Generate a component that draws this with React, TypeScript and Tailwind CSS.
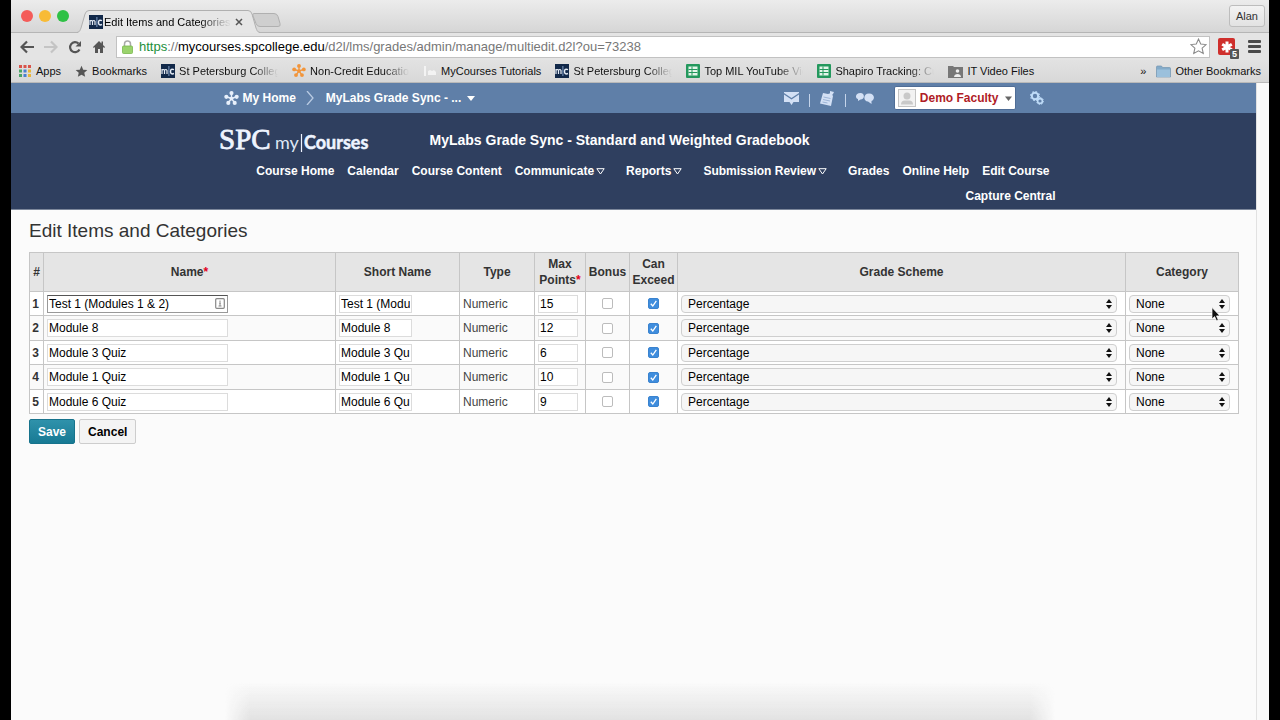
import { Fragment, type ReactNode } from "react";

const fadeMask = "[mask-image:linear-gradient(to_right,#000_75%,transparent)]";

function CampusIcon() {
  return (
    <svg width="14" height="14" viewBox="0 0 14 14" className="shrink-0" aria-hidden="true">
      <rect width="14" height="14" fill="#12294a" />
      <path d="M1 10V5M1 6.500q1.500-2 2.500 0V10M3.500 6.500q1.500-2 2.500 0V10" fill="none" stroke="#e6edf7" strokeWidth="1.200" />
      <path d="M7.900 2v10" stroke="#7f9cc4" strokeWidth="1" />
      <path d="M13 5.600q-3.500-1.500-3.500 1.900t3.500 2" fill="none" stroke="#e6edf7" strokeWidth="1.500" />
    </svg>
  );
}

function HubIcon({ color, size }: { color: string; size: number }) {
  const spokes = [-90, -18, 54, 126, 198];
  return (
    <svg width={size} height={size} viewBox="0 0 16 16" className="shrink-0" aria-hidden="true">
      <g stroke={color} strokeWidth="1.6" fill={color}>
        {spokes.map((deg) => {
          const a = (deg * Math.PI) / 180;
          const x = 8 + 5.8 * Math.cos(a);
          const y = 8 + 5.8 * Math.sin(a);
          return (
            <Fragment key={deg}>
              <path d={`M8 8L${x} ${y}`} />
              <circle cx={x} cy={y} r="2.2" stroke="none" />
            </Fragment>
          );
        })}
        <circle cx="8" cy="8" r="2" stroke="none" />
      </g>
    </svg>
  );
}

function AppsIcon() {
  const colors = ["#d9534a", "#d9534a", "#d9534a", "#4aa564", "#4a7fd0", "#e8b53a", "#4aa564", "#4a7fd0", "#e8b53a"];
  return (
    <svg width="14" height="14" viewBox="0 0 14 14" className="shrink-0" aria-hidden="true">
      {colors.map((c, i) => (
        <rect key={i} x={1 + (i % 3) * 4.5} y={1 + Math.floor(i / 3) * 4.5} width="3" height="3" fill={c} />
      ))}
    </svg>
  );
}

function StarIcon({ filled }: { filled?: boolean }) {
  const size = filled ? 13 : 17;
  return (
    <svg width={size} height={size} viewBox="0 0 16 16" className="shrink-0" aria-hidden="true">
      <path
        d="M8 1l2.1 4.7 5.1.5-3.8 3.4 1.1 5L8 12l-4.500 2.600 1.100-5L.8 6.200l5.100-.5z"
        fill={filled ? "#555" : "#fff"}
        stroke={filled ? "none" : "#8a8a8a"}
        strokeWidth="1"
      />
    </svg>
  );
}

function SheetIcon() {
  return (
    <svg width="14" height="14" viewBox="0 0 14 14" className="shrink-0" aria-hidden="true">
      <rect width="14" height="14" rx="1" fill="#23985d" />
      <rect x="2.500" y="2.500" width="9" height="9" fill="#e4f5ea" />
      <path d="M2.500 5.500h9M2.500 8.500h9M6 2.500v9" stroke="#23985d" strokeWidth="1" />
    </svg>
  );
}

function PageIcon() {
  return (
    <svg width="14" height="14" viewBox="0 0 14 14" className="shrink-0" aria-hidden="true">
      <path d="M1 2h2v10H1zM5 7l2-1 2 1 2-1 2 2v3H5z" fill="#f3f3f3" />
    </svg>
  );
}

function SharedFolderIcon() {
  return (
    <svg width="15" height="13" viewBox="0 0 15 13" className="shrink-0" aria-hidden="true">
      <path d="M0 1h5l1 1h9v11H0z" fill="#777" />
      <circle cx="9.500" cy="6" r="1.800" fill="#eee" />
      <path d="M6 12c0-4 7-4 7 0z" fill="#eee" />
    </svg>
  );
}

function FolderIcon() {
  return (
    <svg width="15" height="13" viewBox="0 0 15 13" className="shrink-0" aria-hidden="true">
      <path d="M.5 2q0-1 1-1h4l1 1.500h7q1 0 1 1V12H.5z" fill="#84abc9" stroke="#7395b1" strokeWidth=".7" />
      <path d="M1 4.500h13V12H1z" fill="#9bc0dc" />
    </svg>
  );
}

type Bookmark = { label: string; icon: ReactNode; cut?: boolean };

const bookmarks: Bookmark[] = [
  { label: "Apps", icon: <AppsIcon /> },
  { label: "Bookmarks", icon: <StarIcon filled /> },
  { label: "St Petersburg Colleg", icon: <CampusIcon />, cut: true },
  { label: "Non-Credit Educatio", icon: <HubIcon color="#f2953a" size={14} />, cut: true },
  { label: "MyCourses Tutorials", icon: <PageIcon /> },
  { label: "St Petersburg Colleg", icon: <CampusIcon />, cut: true },
  { label: "Top MIL YouTube Vie", icon: <SheetIcon />, cut: true },
  { label: "Shapiro Tracking: Cu", icon: <SheetIcon />, cut: true },
  { label: "IT Video Files", icon: <SharedFolderIcon /> },
];

function TabStrip() {
  return (
    <div className="flex h-[33px] items-end border-b border-[#b5b5b5] bg-linear-to-b from-[#ececec] to-[#d6d6d6] pl-[10px]">
      <div className="flex gap-[6px] self-center pb-px">
        <button aria-label="Close window" className="size-3 rounded-full bg-[#f45c59]" />
        <button aria-label="Minimize window" className="size-3 rounded-full bg-[#f8bb36]" />
        <button aria-label="Zoom window" className="size-3 rounded-full bg-[#2fc146]" />
      </div>
      <div className="-mb-px ml-2 flex h-[23px]">
        <svg width="12" height="23" viewBox="0 0 12 23" aria-hidden="true">
          <path d="M0 23C3 22 3 20 4 18L8 4Q9 .5 12 .5V23z" fill="#e6e6e6" />
          <path d="M0 22.500C3 22 3 20 4 18L8 4Q9 .5 12 .5" fill="none" stroke="#b0b0b0" />
        </svg>
        <div className="flex w-[159px] items-center border-t border-[#b0b0b0] bg-[#e6e6e6]">
          <CampusIcon />
          <span className="ml-px w-[127px] text-[11px] whitespace-nowrap text-black [mask-image:linear-gradient(to_right,#000_75%,transparent)]">
            Edit Items and Categories
          </span>
          <button aria-label="Close tab" className="ml-1">
            <svg width="8" height="8" viewBox="0 0 8 8">
              <path d="M1 1l6 6M7 1L1 7" stroke="#555" strokeWidth="1.500" />
            </svg>
          </button>
        </div>
        <svg width="12" height="23" viewBox="0 0 12 23" aria-hidden="true">
          <path d="M12 23C9 22 9 20 8 18L4 4Q3 .5 0 .5V23z" fill="#e6e6e6" />
          <path d="M12 22.500C9 22 9 20 8 18L4 4Q3 .5 0 .5" fill="none" stroke="#b0b0b0" />
        </svg>
      </div>
      <button aria-label="New tab" className="-ml-2 mb-[5px]">
        <svg width="29" height="14" viewBox="0 0 29 14">
          <path d="M2 .5h20q3 0 4 3l2 7q1 3-2 3H8q-3 0-4-3L1 3Q0 .5 2 .5z" fill="#cfcfcf" stroke="#b0b0b0" />
        </svg>
      </button>
      <button className="mr-1 mb-[5px] ml-auto h-[22px] rounded-[3px] border border-[#bdbdbd] bg-linear-to-b from-[#f3f3f3] to-[#e2e2e2] px-[6px] text-[11px] text-[#333]">
        Alan
      </button>
    </div>
  );
}

function Toolbar() {
  return (
    <div className="flex h-[27px] items-center bg-[#e4e4e4] pr-2 pl-2">
      <div className="flex w-[97px] items-center gap-[10px] pl-px">
        <button aria-label="Back">
          <svg width="14" height="14" viewBox="0 0 14 14" fill="none" stroke="#555" strokeWidth="2.200">
            <path d="M14 7H2M7 1.500L1.500 7 7 12.500" />
          </svg>
        </button>
        <button aria-label="Forward">
          <svg width="14" height="14" viewBox="0 0 14 14" fill="none" stroke="#c4c4c4" strokeWidth="2.200">
            <path d="M0 7h12M7 1.500L12.500 7 7 12.500" />
          </svg>
        </button>
        <button aria-label="Reload">
          <svg width="14" height="14" viewBox="0 0 14 14">
            <path d="M11.500 9.500A5 5 0 1 1 10.500 3.500" fill="none" stroke="#555" strokeWidth="2.200" />
            <path d="M13 1v5.500H7.500z" fill="#555" />
          </svg>
        </button>
        <button aria-label="Home">
          <svg width="14" height="14" viewBox="0 0 14 14" fill="#555">
            <path d="M7 1L1 7l.8 1L3 7v6h3V9h2v4h3V7l1.200 1 .8-1-2-2V1.500H9.500V3.500z" />
          </svg>
        </button>
      </div>
      <div className="flex h-[22px] flex-1 items-center gap-[6px] border border-[#c2c2c2] bg-white pr-[2px] pl-[5px]">
        <svg width="11" height="14" viewBox="0 0 11 14" className="shrink-0" aria-hidden="true">
          <path d="M2.500 7V4a3 3 0 0 1 6 0v3" fill="none" stroke="#aaa" strokeWidth="1.500" />
          <rect x=".5" y="6" width="10" height="7.500" rx="1" fill="#9ad36c" stroke="#78b84c" strokeWidth=".8" />
        </svg>
        <span className="flex-1 text-[13px] leading-5 whitespace-nowrap text-[#777]">
          <span className="text-[#1b8f3a]">https</span>://<span className="text-black">mycourses.spcollege.edu</span>/d2l/lms/grades/admin/manage/multiedit.d2l?ou=73238
        </span>
        <button aria-label="Bookmark this page">
          <StarIcon />
        </button>
      </div>
      <button aria-label="Password manager, 5 entries" className="relative ml-2 flex size-[17px] items-center justify-center rounded-[2px] bg-[#cf2f2c]">
        <svg width="12" height="12" viewBox="0 0 12 12" stroke="#fff" strokeWidth="3" aria-hidden="true">
          <path d="M6 .5v11M1.200 3.200l9.600 5.600M1.200 8.800l9.600-5.600" />
        </svg>
        <span className="absolute -right-1 -bottom-1 flex h-[10px] w-[9px] items-center justify-center rounded-[1px] bg-[#555] text-[9px] leading-none font-bold text-white">5</span>
      </button>
      <button aria-label="Menu" className="ml-[13px] flex w-[13px] flex-col gap-[2px]">
        <span className="h-[3px] rounded-[1px] bg-[#4a4a4a]" />
        <span className="h-[3px] rounded-[1px] bg-[#4a4a4a]" />
        <span className="h-[3px] rounded-[1px] bg-[#4a4a4a]" />
      </button>
    </div>
  );
}

function BookmarksBar() {
  return (
    <nav aria-label="Bookmarks" className="flex h-[23px] items-center border-b border-[#b9b9b9] bg-linear-to-b from-[#e2e2e2] to-[#d8d8d8] pr-2 pl-[7px] text-[11px] whitespace-nowrap text-[#111]">
      <ul className="flex items-center gap-[14px]">
        {bookmarks.map((b, i) => (
          <li key={i}>
            <a href="#" className="flex items-center gap-1">
              {b.icon}
              {b.cut ? <span className={`w-[99px] ${fadeMask}`}>{b.label}</span> : b.label}
            </a>
          </li>
        ))}
      </ul>
      <button aria-label="More bookmarks" className="ml-auto">»</button>
      <a href="#" className="ml-[10px] flex items-center gap-1">
        <FolderIcon />
        Other Bookmarks
      </a>
    </nav>
  );
}

function MiniBar() {
  return (
    <div className="bg-[#5f7fa8]">
      <div className="mx-auto flex h-[30px] max-w-[844px] items-center pr-3 pl-3 text-[12px] font-bold whitespace-nowrap text-white">
        <a href="#" className="flex items-center gap-1">
          <HubIcon color="#e8f0fb" size={15} />
          My Home
        </a>
        <svg width="8" height="14" viewBox="0 0 8 14" className="ml-[10px]" aria-hidden="true">
          <path d="M1 0l6 7-6 7" fill="none" stroke="#b9cbe3" strokeWidth="1.300" />
        </svg>
        <button className="ml-3 flex items-center gap-[6px]">
          MyLabs Grade Sync - ...
          <svg width="8" height="5" viewBox="0 0 8 5" aria-hidden="true">
            <path d="M0 0h8L4 5z" fill="#fff" />
          </svg>
        </button>
        <div className="ml-auto flex items-center gap-[10px]">
          <button aria-label="Messages">
            <svg width="15" height="13" viewBox="0 0 15 13" fill="#d3e0f5">
              <path d="M0 0h15v1L7.500 6 0 1z" />
              <path d="M0 2.500l7.500 5L15 2.500V10H9.500l-2 3-2-3H0z" />
            </svg>
          </button>
          <span className="mt-1 h-[13px] w-px bg-[#c5d4ea]" />
          <button aria-label="Updates">
            <svg width="15" height="15" viewBox="0 0 15 15">
              <path d="M3 2l5 1 3-1 2 3-2 10L0 12.500z" fill="#d3e0f5" />
              <path d="M3.500 6l7 1.500M3 8.500l7 1.500M2.500 11l5 1" stroke="#84a0c8" strokeWidth=".7" />
              <path d="M10 0l4 1-1 2-2 2-1-2z" fill="#d3e0f5" />
            </svg>
          </button>
          <span className="mt-1 h-[13px] w-px bg-[#c5d4ea]" />
          <button aria-label="Discussions">
            <svg width="18" height="12" viewBox="0 0 18 12" fill="#d3e0f5">
              <path d="M4.500 1C-1 1-1 6.500 2 7L2 9l2.500-1.500C9 7.500 9 1 4.500 1z" />
              <path d="M13 1.500c-6 0-6 8-1 8L15.500 12V9c4-2 3-7.500-2.500-7.500z" />
            </svg>
          </button>
        </div>
        <button className="ml-5 flex h-6 items-center rounded-[2px] border border-[#4f6d96] bg-white px-[3px] text-[#b01c26]">
          <svg width="18" height="18" viewBox="0 0 18 18" aria-hidden="true">
            <rect x=".5" y=".5" width="17" height="17" fill="#f2f2f2" stroke="#c4c4c4" />
            <circle cx="9" cy="7" r="3.500" fill="#c9c9c9" />
            <path d="M3 15.500q0-4 4-4h4q4 0 4 4z" fill="#c9c9c9" />
          </svg>
          <span className="ml-1">Demo Faculty</span>
          <svg width="7" height="5" viewBox="0 0 7 5" className="ml-[6px]" aria-hidden="true">
            <path d="M0 .5h7L3.500 5z" fill="#666" />
          </svg>
        </button>
        <button aria-label="Course settings" className="ml-[14px]">
          <svg width="14" height="14" viewBox="0 0 14 14" fill="none" stroke="#bfdcf8">
            <circle cx="5" cy="5" r="3.200" strokeWidth="2" />
            <circle cx="5" cy="5" r="4.600" strokeWidth="1" strokeDasharray="1.800 1.800" />
            <circle cx="10" cy="10" r="2.400" strokeWidth="1.600" fill="#5f7fa8" />
            <circle cx="10" cy="10" r="3.500" strokeWidth=".9" strokeDasharray="1.400 1.300" />
          </svg>
        </button>
      </div>
    </div>
  );
}

const navItems: { label: string; menu?: boolean; last?: boolean }[] = [
  { label: "Course Home" },
  { label: "Calendar" },
  { label: "Course Content" },
  { label: "Communicate", menu: true },
  { label: "Reports", menu: true },
  { label: "Submission Review", menu: true },
  { label: "Grades" },
  { label: "Online Help" },
  { label: "Edit Course", last: true },
  { label: "Capture Central" },
];

function CourseHeader() {
  return (
    <header className="border-b border-[#7c879b] bg-[#2f3f5f] text-white">
      <div className="mx-auto max-w-[844px]">
        <div className="flex h-[46px] items-center pt-2 pl-[6px]">
          <a href="#" aria-label="SPC myCourses home">
            <svg width="154" height="34" viewBox="0 0 154 34">
              <text x="1" y="26" fill="#eef4ff" stroke="#eef4ff" strokeWidth=".8" fontFamily="'Liberation Serif', serif" fontSize="29">SPC</text>
              <text x="57" y="26" fill="#dfe7f5" fontFamily="Lato, sans-serif" fontSize="18">my</text>
              <path d="M83.500 11v18" stroke="#eef4ff" strokeWidth="1.200" />
              <text x="86" y="26" fill="#eef4ff" stroke="#eef4ff" strokeWidth=".5" fontFamily="Lato, sans-serif" fontWeight="700" fontSize="18">Courses</text>
            </svg>
          </a>
          <h2 className="ml-[58px] text-[14px] font-bold">MyLabs Grade Sync - Standard and Weighted Gradebook</h2>
        </div>
        <ul className="flex flex-wrap justify-end gap-x-[13px] text-[12px] leading-[25px] font-bold">
          {navItems.map((n) => (
            <li key={n.label} className={n.menu ? "mr-2" : n.last ? "mr-[6px]" : ""}>
              <a href="#" className="flex items-center gap-[2px]">
                {n.label}
                {n.menu && (
                  <svg width="9" height="7" viewBox="0 0 9 7" aria-hidden="true">
                    <path d="M.8 .7h7.400L4.500 6z" fill="none" stroke="#fff" />
                  </svg>
                )}
              </a>
            </li>
          ))}
        </ul>
      </div>
    </header>
  );
}

const items = [
  { name: "Test 1 (Modules 1 & 2)", short: "Test 1 (Modu", points: "15" },
  { name: "Module 8", short: "Module 8", points: "12" },
  { name: "Module 3 Quiz", short: "Module 3 Qu", points: "6" },
  { name: "Module 1 Quiz", short: "Module 1 Qu", points: "10" },
  { name: "Module 6 Quiz", short: "Module 6 Qu", points: "9" },
];

function Field({ label, value, className }: { label: string; value: string; className: string }) {
  return (
    <input
      type="text"
      aria-label={label}
      defaultValue={value}
      className={`block h-[18px] border bg-white px-px text-[12px] leading-4 text-black outline-none ${className}`}
    />
  );
}

function Check({ label, checked }: { label: string; checked?: boolean }) {
  return (
    <span className="mx-auto grid size-[11px]">
      <input
        type="checkbox"
        aria-label={label}
        defaultChecked={checked}
        className="peer size-[11px] appearance-none rounded-[2px] border border-[#bcbcbc] bg-white [grid-area:1/1] checked:border-[#3a83cf] checked:bg-[#3f8ddd]"
      />
      <svg width="11" height="11" viewBox="0 0 11 11" className="pointer-events-none invisible [grid-area:1/1] peer-checked:visible" aria-hidden="true">
        <path d="M2.800 5.800l2 2.200L8.300 2.800" fill="none" stroke="#fff" strokeWidth="1.300" />
      </svg>
    </span>
  );
}

function Select({ label, value }: { label: string; value: string }) {
  return (
    <span className="mr-2 grid items-center">
      <select
        aria-label={label}
        className="h-[18px] w-full appearance-none rounded-[4px] border border-[#cfcfcf] bg-[#f6f6f6] pl-[6px] text-[12px] leading-4 text-black [grid-area:1/1]"
      >
        <option>{value}</option>
      </select>
      <svg width="6" height="10" viewBox="0 0 6 10" className="pointer-events-none mr-[5px] justify-self-end [grid-area:1/1]" aria-hidden="true">
        <path d="M0 4l3-4 3 4zM0 6l3 4 3-4z" fill="#111" />
      </svg>
    </span>
  );
}

const th = "border border-[#c6c6c6] font-bold text-[#333] leading-4";
const td = "border border-[#c6c6c6] py-0 pl-[3px] pr-0";

function ItemsTable() {
  return (
    <table className="w-full table-fixed border-collapse text-[12px]">
      <colgroup>
        <col className="w-[14px]" />
        <col className="w-[292px]" />
        <col className="w-[124px]" />
        <col className="w-[75px]" />
        <col className="w-[51px]" />
        <col className="w-[44px]" />
        <col className="w-[48px]" />
        <col />
        <col className="w-[113px]" />
      </colgroup>
      <thead>
        <tr className="h-[39px] bg-[#e5e5e5]">
          <th className={th}>#</th>
          <th className={th}>Name<span className="text-[#e3001b]">*</span></th>
          <th className={th}>Short Name</th>
          <th className={th}>Type</th>
          <th className={th}>Max Points<span className="text-[#e3001b]">*</span></th>
          <th className={th}>Bonus</th>
          <th className={th}>Can Exceed</th>
          <th className={th}>Grade Scheme</th>
          <th className={th}>Category</th>
        </tr>
      </thead>
      <tbody>
        {items.map((it, i) => (
          <tr key={it.name} className="h-6 odd:bg-white even:h-[25px] even:bg-[#fafafa]">
            <th scope="row" className="border border-[#c6c6c6] pr-[2px] text-center font-bold text-[#333]">{i + 1}</th>
            <td className={td}>
              <span className="grid w-[181px] items-center">
                <Field
                  label={`Name of item ${i + 1}`}
                  value={it.name}
                  className={`w-full [grid-area:1/1] ${i === 0 ? "border-[#999] border-t-[#555]" : "border-[#dcdcdc]"}`}
                />
                {i === 0 && (
                  <svg width="10" height="11" viewBox="0 0 10 11" className="mr-[3px] justify-self-end [grid-area:1/1]" aria-hidden="true">
                    <rect x=".7" y=".7" width="8.600" height="9.600" rx="1" fill="#fff" stroke="#888" strokeWidth="1.200" />
                    <path d="M5 2.500v1.500M4 5h2M5 5v3M3.500 8h3" stroke="#888" />
                  </svg>
                )}
              </span>
            </td>
            <td className={td}>
              <Field label={`Short name of item ${i + 1}`} value={it.short} className="w-[73px] border-[#dcdcdc]" />
            </td>
            <td className={`${td} text-[#444]`}>Numeric</td>
            <td className={td}>
              <Field label={`Max points of item ${i + 1}`} value={it.points} className="w-10 border-[#dcdcdc]" />
            </td>
            <td className="border border-[#c6c6c6] p-0">
              <Check label={`Bonus, item ${i + 1}`} />
            </td>
            <td className="border border-[#c6c6c6] p-0">
              <Check label={`Can exceed, item ${i + 1}`} checked />
            </td>
            <td className={td}>
              <Select label={`Grade scheme of item ${i + 1}`} value="Percentage" />
            </td>
            <td className={td}>
              <Select label={`Category of item ${i + 1}`} value="None" />
            </td>
          </tr>
        ))}
      </tbody>
    </table>
  );
}

export default function App() {
  return (
    <div className="relative flex min-h-screen flex-col overflow-hidden bg-black px-[11px] font-['Liberation_Sans',Arial,sans-serif]">
      <div className="rounded-t-[4px] bg-[#e4e4e4]">
        <TabStrip />
        <Toolbar />
        <BookmarksBar />
      </div>
      <div className="relative flex flex-1 bg-[#fbfbfb]">
        <div className="min-w-0 flex-1">
          <MiniBar />
          <CourseHeader />
          <main className="pt-2 pr-[17px] pl-[18px]">
            <h1 className="mb-2 text-[19px] leading-[26px] text-[#333]">Edit Items and Categories</h1>
            <ItemsTable />
            <div className="mt-[5px] flex gap-1 text-[12px] font-bold">
              <button className="h-[25px] rounded-[2px] border border-[#17738c] bg-linear-to-b from-[#2f92ab] to-[#177a94] px-2 text-white">Save</button>
              <button className="h-[25px] rounded-[2px] border border-[#cdcdcd] bg-[#f4f4f4] px-2 text-black">Cancel</button>
            </div>
          </main>
        </div>
        <div className="w-[13px] border-l border-[#e2e2e2] bg-[#fafafa]" />
        <div className="pointer-events-none absolute inset-x-[214px] bottom-0 h-[38px] bg-linear-to-b from-transparent to-[#e2e2e2] [mask-image:linear-gradient(to_right,transparent,#000_3%,#000_97%,transparent)]" />
      </div>
      <svg width="10" height="15" viewBox="0 0 10 15" className="pointer-events-none absolute top-[307px] right-[59px]" aria-hidden="true">
        <path d="M1 .5v11.500l2.600-2.400 1.900 4.200 1.800-.8-1.800-4.100H9z" fill="#111" stroke="#fff" strokeWidth=".7" />
      </svg>
    </div>
  );
}
